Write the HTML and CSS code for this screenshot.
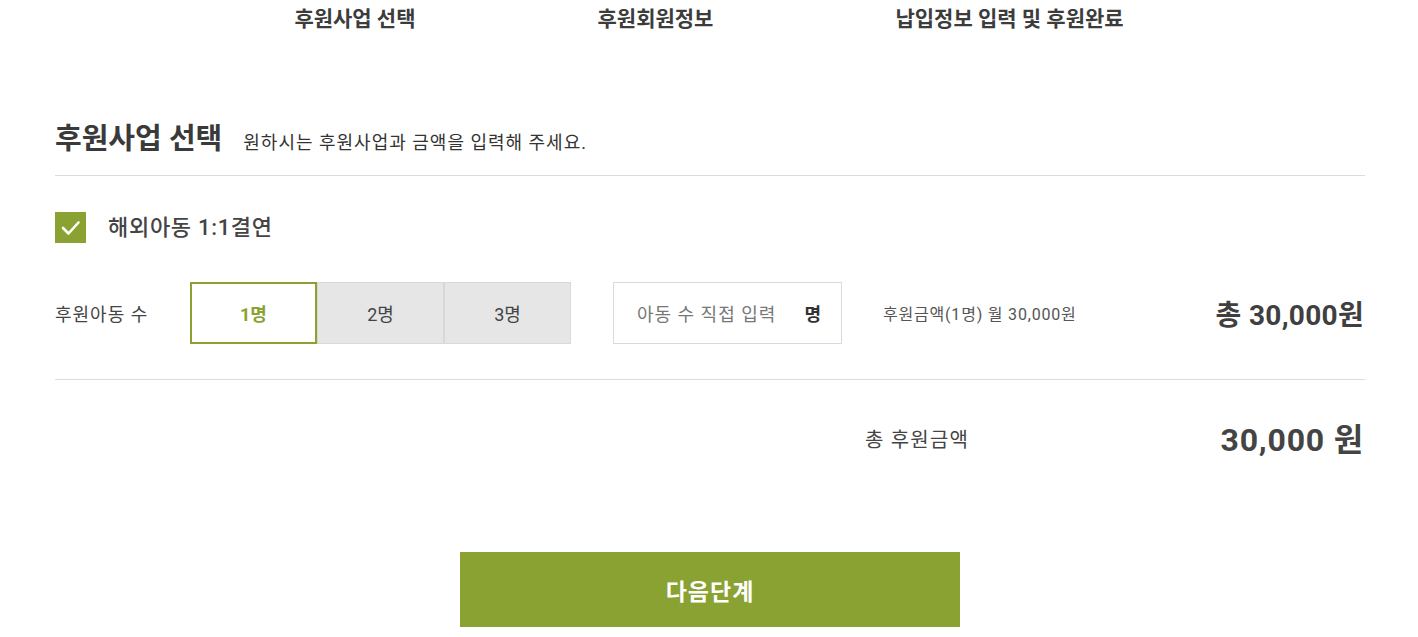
FILE: index.html
```html
<!DOCTYPE html>
<html lang="ko">
<head>
<meta charset="utf-8">
<title>후원사업 선택</title>
<link rel="stylesheet" href="styles.css">
</head>
<body>
<div class="page">
  <ol class="steps">
    <li>후원사업 선택</li>
    <li>후원회원정보</li>
    <li>납입정보 입력 및 후원완료</li>
  </ol>

  <div class="section-head">
    <h2>후원사업 선택</h2>
    <p>원하시는 후원사업과 금액을 입력해 주세요.</p>
  </div>

  <div class="program">
    <span class="check">
      <svg width="31" height="31" viewBox="0 0 31 31"><rect width="31" height="31" fill="#8aa231"/><path d="M8 16 L13.5 21.5 L23.5 10.5" stroke="#fff" stroke-width="2.6" fill="none" stroke-linecap="round" stroke-linejoin="round"/></svg>
    </span>
    <span class="program-name">해외아동 1:1결연</span>
  </div>

  <div class="count-row">
    <span class="count-label">후원아동 수</span>
    <div class="count-opts">
      <button class="opt active">1명</button>
      <button class="opt">2명</button>
      <button class="opt">3명</button>
    </div>
    <div class="direct">
      <span class="placeholder">아동 수 직접 입력</span>
      <span class="unit">명</span>
    </div>
    <span class="monthly">후원금액(1명) 월 30,000원</span>
    <span class="sum">총 30,000원</span>
  </div>

  <div class="total-row">
    <span class="total-label">총 후원금액</span>
    <span class="total-value">30,000 원</span>
  </div>

  <div class="actions">
    <button class="next">다음단계</button>
  </div>
</div>
</body>
</html>
```
FILE: styles.css
```css
* { box-sizing: border-box; }
body {
  margin: 0;
  background: #fff;
  color: #444;
  font-family: Roboto, "Noto Sans CJK KR", "Noto Sans", sans-serif;
}
.page {
  margin: 0 53px 0 55px;
}
.steps {
  list-style: none;
  margin: 0;
  padding: 0 2px 0 0;
  display: flex;
  justify-content: center;
  gap: 182px;
  height: 34px;
  align-items: center;
  font-size: 21px;
  font-weight: 700;
  color: #3c3c3c;
}
.section-head {
  display: flex;
  align-items: baseline;
  gap: 21px;
  margin-top: 85px;
  padding-bottom: 16px;
  border-bottom: 1px solid #dcdcdc;
}
.section-head h2 {
  margin: 0;
  font-size: 29px;
  font-weight: 700;
  color: #3a3a3a;
  line-height: 40px;
}
.section-head p {
  margin: 0;
  font-size: 18px;
  color: #333;
  letter-spacing: 1px;
}
.program {
  display: flex;
  align-items: center;
  gap: 22px;
  margin-top: 36px;
  height: 31px;
}
.check { display: flex; }
.program-name {
  font-size: 22px;
  line-height: 31px;
  font-weight: 500;
  color: #444;
  letter-spacing: 0.7px;
}
.count-row {
  display: flex;
  align-items: center;
  margin-top: 39px;
  padding-bottom: 35px;
  border-bottom: 1px solid #dcdcdc;
}
.count-label {
  width: 135px;
  font-size: 18px;
  letter-spacing: 1px;
  color: #444;
}
.count-opts { display: flex; }
.opt {
  width: 127px;
  height: 62px;
  border: 1px solid #dadada;
  background: #e6e6e6;
  font-family: inherit;
  font-size: 18px;
  color: #444;
  padding: 0;
}
.opt + .opt { border-left: 1px solid #d6d6d6; }
.opt.active {
  background: #fff;
  border: 2px solid #8aa231;
  color: #8aa231;
  font-weight: 700;
}
.direct {
  margin-left: 42px;
  width: 229px;
  height: 62px;
  border: 1px solid #dadada;
  display: flex;
  align-items: center;
  justify-content: space-between;
  padding: 0 20px 0 23px;
}
.placeholder { font-size: 18px; letter-spacing: 1px; color: #777; }
.unit { font-size: 18px; font-weight: 700; color: #333; }
.monthly {
  margin-left: 41px;
  font-size: 16px;
  color: #555;
  letter-spacing: 0.8px;
}
.sum {
  margin-left: auto;
  margin-right: 1px;
  font-size: 28px;
  font-weight: 700;
  color: #3f3f3f;
  letter-spacing: 0.3px;
}
.total-row {
  display: flex;
  align-items: center;
  justify-content: space-between;
  padding-left: 810px;
  margin-top: 40px;
  height: 40px;
  padding-right: 1px;
}
.total-label { font-size: 20px; line-height: 40px; letter-spacing: 1.2px; color: #444; }
.total-value {
  font-size: 32px;
  line-height: 40px;
  font-weight: 700;
  letter-spacing: 0.8px;
  color: #444;
}
.actions {
  display: flex;
  justify-content: center;
  margin-top: 92px;
}
.next {
  width: 500px;
  height: 75px;
  border: 0;
  background: #8aa231;
  color: #fff;
  font-family: inherit;
  font-size: 23px;
  font-weight: 700;
  letter-spacing: 1px;
}
```
